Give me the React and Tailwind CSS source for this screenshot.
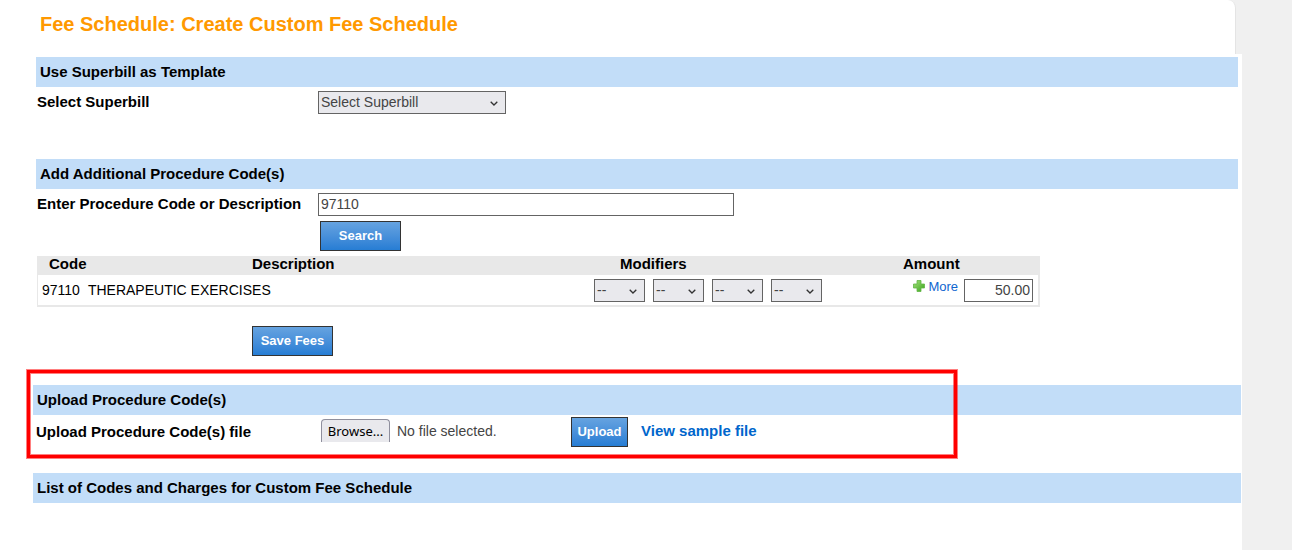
import React from "react";

const SUPERBILLS = ["Select Superbill"];
const MODIFIER_SLOTS = [1, 2, 3, 4];

const PROCEDURES = [
  { code: "97110", description: "THERAPEUTIC EXERCISES", amount: "50.00" },
];

const fieldBorder = "border border-[#646464] text-[#444444]";

function SectionBar({ children }) {
  return (
    <h2 className="h-[30px] bg-[#c2ddf8] px-1 text-[15px] leading-[30px] font-bold">
      {children}
    </h2>
  );
}

function BlueButton({ className = "", ...props }) {
  return (
    <button
      type="button"
      className={`h-[30px] border border-[#333333] bg-linear-to-b from-[#66a3e0] to-[#267dd4] text-center text-[13px] leading-5 font-bold whitespace-nowrap text-white ${className}`}
      {...props}
    />
  );
}

function Select({ options, className = "", ...props }) {
  return (
    <span className={`relative inline-block ${className}`}>
      <select
        className={`block h-[23px] w-full appearance-none bg-[#e9e9ed] pr-6 pb-[2px] pl-[2px] text-[14px] leading-5 ${fieldBorder}`}
        {...props}
      >
        {options.map((option) => (
          <option key={option}>{option}</option>
        ))}
      </select>
      <svg
        viewBox="0 0 8 5"
        className="pointer-events-none absolute top-[10px] right-[8px] h-[5px] w-2 fill-none stroke-[#333333]"
        strokeWidth="1.3"
      >
        <path d="M0.7 0.7 4 4 7.3 0.7" />
      </svg>
    </span>
  );
}

function PlusIcon() {
  return (
    <svg viewBox="0 0 12 12" className="h-3 w-3" aria-hidden="true">
      <defs>
        <linearGradient id="plus" x1="0" y1="0" x2="1" y2="1">
          <stop offset="0" stopColor="#a4e07c" />
          <stop offset="1" stopColor="#3aa51c" />
        </linearGradient>
      </defs>
      <path
        d="M4 .5h4V4h3.5v4H8v3.5H4V8H.5V4H4Z"
        fill="url(#plus)"
        stroke="#62b548"
        strokeWidth=".8"
        strokeLinejoin="round"
      />
    </svg>
  );
}

function FileField({ id }) {
  const inputRef = React.useRef(null);
  const [fileName, setFileName] = React.useState("");

  return (
    <div className="flex w-[250px] items-start text-[14px]">
      <input
        ref={inputRef}
        id={id}
        type="file"
        tabIndex={-1}
        className="sr-only"
        onChange={(e) => setFileName(e.target.files[0]?.name ?? "")}
      />
      <button
        type="button"
        onClick={() => inputRef.current.click()}
        className="h-[23px] w-[69px] rounded-t border border-b-0 border-[#8f8f9d] bg-[#e9e9ed] font-['Noto_Sans',sans-serif] text-[13px] leading-5 text-black"
      >
        Browse...
      </button>
      <span className="ml-[7px] leading-6 text-[#444444]">
        {fileName || "No file selected."}
      </span>
    </div>
  );
}

// Tabla con los procedimientos encontrados
function ProcedureTable() {
  return (
    <table className="mt-[5px] ml-px w-[1003px] table-fixed border-separate border-spacing-0 text-[14px]">
      <colgroup>
        <col className="w-[215px]" />
        <col className="w-[342px]" />
        <col className="w-[263px]" />
        <col />
      </colgroup>
      <thead className="bg-[#e8e8e8] text-left text-[15px] leading-4">
        <tr>
          <th className="h-[19px] p-0 pb-[3px] pl-3">Code</th>
          <th className="p-0 pb-[3px]">Description</th>
          <th className="p-0 pb-[3px] pl-[26px]">Modifiers</th>
          <th className="p-0 pb-[3px] pl-[46px]">Amount</th>
        </tr>
      </thead>
      <tbody>
        {PROCEDURES.map(({ code, description, amount }) => (
          <tr key={code} className="h-[32px] *:border-b-2 *:border-[#e8e8e8]">
            <td colSpan={2} className="border-l p-0 pl-1">
              <span className="mr-2">{code}</span>
              {description}
            </td>
            <td className="p-0">
              <div className="flex gap-2">
                {MODIFIER_SLOTS.map((slot) => (
                  <Select
                    key={slot}
                    options={["--"]}
                    className="w-[51px]"
                    aria-label={`Modifier ${slot}`}
                  />
                ))}
              </div>
            </td>
            <td className="border-r-2 p-0 pr-[5px]">
              <div className="flex items-start justify-end">
                <a
                  href="#more"
                  className="mr-[6px] flex items-center gap-[3px] text-[13px] leading-[15px] text-[#0f66d0]"
                >
                  <PlusIcon />
                  More
                </a>
                <input
                  type="text"
                  aria-label="Amount"
                  defaultValue={amount}
                  className={`h-[23px] w-[69px] bg-white px-[2px] text-right ${fieldBorder}`}
                />
              </div>
            </td>
          </tr>
        ))}
      </tbody>
    </table>
  );
}

export default function App() {
  return (
    <div className="flex min-h-screen bg-[#f0f0f0] font-['Liberation_Sans',Arial,sans-serif] text-[14px] text-black">
      <main className="mr-[50px] flex-1">
        <header className="mr-[6px] h-[54px] rounded-tr-lg border-r border-[#e4e4e4] bg-white pt-3 pl-10">
          <h1 className="text-[20px] leading-6 font-bold text-[#ff9900]">
            Fee Schedule: Create Custom Fee Schedule
          </h1>
        </header>

        <div className="min-h-[496px] bg-white pt-[3px]">
          <div className="mr-1 ml-9">
            <section className="h-[102px]">
              <SectionBar>Use Superbill as Template</SectionBar>
              <div className="flex items-center pt-1">
                <label htmlFor="superbill" className="w-[282px] pl-px text-[15px] font-bold">
                  Select Superbill
                </label>
                <Select id="superbill" options={SUPERBILLS} className="w-[188px]" />
              </div>
            </section>

            <section>
              <SectionBar>Add Additional Procedure Code(s)</SectionBar>
              <div className="flex items-center pt-1">
                <label htmlFor="procedure" className="w-[282px] pl-px text-[15px] font-bold">
                  Enter Procedure Code or Description
                </label>
                <input
                  id="procedure"
                  type="text"
                  defaultValue="97110"
                  className={`h-[23px] w-[416px] bg-white px-[2px] pb-[2px] ${fieldBorder}`}
                />
              </div>
              <BlueButton className="mt-[5px] ml-[284px] block w-[81px]">Search</BlueButton>
              <ProcedureTable />
              <BlueButton className="mt-[19px] ml-[216px] block w-[81px]">Save Fees</BlueButton>
            </section>
          </div>

          <div className="mt-[29px] mr-px ml-[33px]">
            <section className="relative h-[88px]">
              <SectionBar>Upload Procedure Code(s)</SectionBar>
              <div className="flex items-start pt-[2px]">
                <label
                  htmlFor="codes-file"
                  className="w-[288px] pl-[3px] text-[15px] leading-[30px] font-bold"
                >
                  Upload Procedure Code(s) file
                </label>
                <div className="pt-[2px]">
                  <FileField id="codes-file" />
                </div>
                <BlueButton className="w-[57px]">Upload</BlueButton>
                <a
                  href="#sample"
                  className="ml-[13px] text-[15px] leading-7 font-bold text-[#0066cc]"
                >
                  View sample file
                </a>
              </div>
              {/* Marco rojo que resalta la carga de archivos */}
              <div className="pointer-events-none absolute -top-[15px] -left-[6px] h-[88px] w-[930px] border-3 border-[#ff0000] shadow-[0_0_0_1px_#ff000080,inset_0_0_0_1px_#ff000080]" />
            </section>

            <section>
              <SectionBar>List of Codes and Charges for Custom Fee Schedule</SectionBar>
            </section>
          </div>
        </div>
      </main>
    </div>
  );
}
